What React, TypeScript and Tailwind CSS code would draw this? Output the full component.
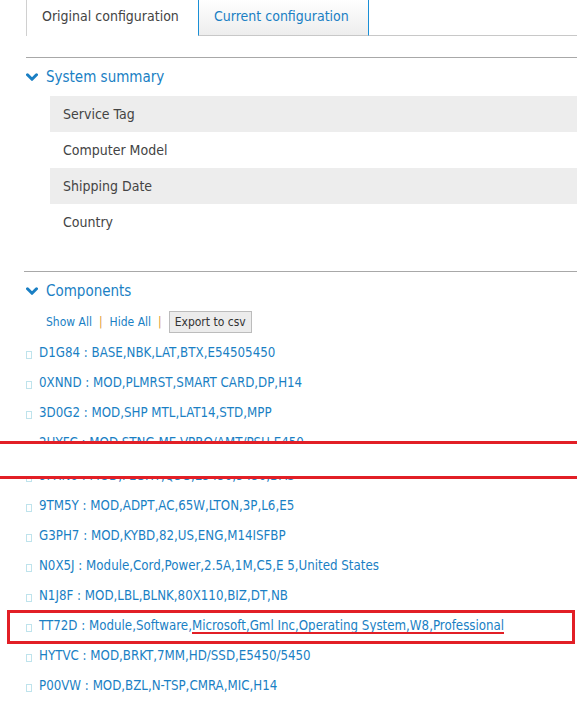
import React from "react";

const font = { fontFamily: '"DejaVu Sans Condensed", "DejaVu Sans", sans-serif' };

const summaryRows = ["Service Tag", "Computer Model", "Shipping Date", "Country"];

const before = [
  "D1G84 : BASE,NBK,LAT,BTX,E54505450",
  "0XNND : MOD,PLMRST,SMART CARD,DP,H14",
  "3D0G2 : MOD,SHP MTL,LAT14,STD,MPP",
  "2HYFC : MOD,STNG,ME,VPRO/AMT/PSH,E450",
];

const after = [
  "9FXN6 : MOD,PLGHT,Q3G,E5450,5450,DAS",
  "9TM5Y : MOD,ADPT,AC,65W,LTON,3P,L6,E5",
  "G3PH7 : MOD,KYBD,82,US,ENG,M14ISFBP",
  "N0X5J : Module,Cord,Power,2.5A,1M,C5,E 5,United States",
  "N1J8F : MOD,LBL,BLNK,80X110,BIZ,DT,NB",
];

const tail = [
  "HYTVC : MOD,BRKT,7MM,HD/SSD,E5450/5450",
  "P00VW : MOD,BZL,N-TSP,CMRA,MIC,H14",
];

function Chevron() {
  return (
    <svg width="12" height="9" viewBox="0 0 12 9" className="shrink-0">
      <polyline points="1.5,1.8 6,6.3 10.5,1.8" fill="none" stroke="#1a7fc4" strokeWidth="3" strokeLinecap="round" strokeLinejoin="round" />
    </svg>
  );
}

function Item({ text, children }: { text?: string; children?: React.ReactNode }) {
  return (
    <div className="flex items-center h-[30px] pl-[26px]">
      <span className="w-[6px] h-[8px] border border-[#bfe3ec] mt-[4px] mr-[7px] shrink-0" />
      <span className="text-[13.2px] text-[#1a7fc4] whitespace-nowrap">{text ?? children}</span>
    </div>
  );
}

export default function App() {
  return (
    <div className="relative w-full h-[703px] overflow-hidden bg-white" style={font}>
      {/* tabs */}
      <div className="flex h-[36px] pl-[26px]">
        <div className="w-[172px] border-l border-[#d0d0d0] bg-white flex items-center pl-[15px] pb-[3px] text-[14px] text-[#444]">
          Original configuration
        </div>
        <div className="w-[171px] border-x border-[#1a8fd6] border-b border-b-[#c8c8c8] bg-gradient-to-b from-white to-[#ededed] flex items-center pl-[15px] pb-[3px] text-[14px] text-[#1a7fc4]">
          Current configuration
        </div>
        <div className="flex-1 border-b border-[#c8c8c8]" />
      </div>

      <div className="mt-[21px] ml-[26px] border-t border-[#a8a8a8]" />

      {/* system summary */}
      <div className="flex items-center gap-[8px] pl-[26px] h-[38px] text-[15px] text-[#1a7fc4]">
        <Chevron />
        <span>System summary</span>
      </div>
      <div className="ml-[50px]">
        {summaryRows.map((r, i) => (
          <div key={r} className={`h-[36px] flex items-center pl-[13px] text-[14px] text-[#444] ${i % 2 === 0 ? "bg-[#ededed]" : ""}`}>
            {r}
          </div>
        ))}
      </div>

      <div className="mt-[31px] ml-[24px] border-t border-[#a8a8a8]" />

      {/* components */}
      <div className="flex items-center gap-[8px] pl-[26px] h-[38px] text-[15px] text-[#1a7fc4]">
        <Chevron />
        <span>Components</span>
      </div>
      <div className="flex items-center pl-[46px] h-[24px] text-[12px] text-[#1a7fc4]">
        <span>Show All</span>
        <span className="mx-[7px] text-[#e0992f]">|</span>
        <span>Hide All</span>
        <span className="mx-[7px] text-[#e0992f]">|</span>
        <button className="h-[22px] px-[5px] bg-[#ececec] border border-[#bcbcbc] text-[12px] text-[#333]">Export to csv</button>
      </div>

      <div className="mt-[4px]">
        {before.map((t) => (
          <Item key={t} text={t} />
        ))}
        <div className="h-[3px]" />
        {after.map((t) => (
          <Item key={t} text={t} />
        ))}
        <Item>
          TT72D : Module,Software,
          <span className="relative">
            Microsoft,Gml Inc,Operating System,W8,Professional
            <span className="absolute left-0 right-0 bottom-[-1px] h-[2px] bg-[#e21f26]" />
          </span>
        </Item>
        {tail.map((t) => (
          <Item key={t} text={t} />
        ))}
      </div>

      {/* annotation overlays */}
      <div className="absolute left-0 right-0 top-[441px] h-[38px] bg-white border-y-[3px] border-[#e21f26]" />
      <div className="absolute left-[7px] right-[2px] top-[610px] h-[34px] border-[3px] border-[#e21f26]" />
    </div>
  );
}
